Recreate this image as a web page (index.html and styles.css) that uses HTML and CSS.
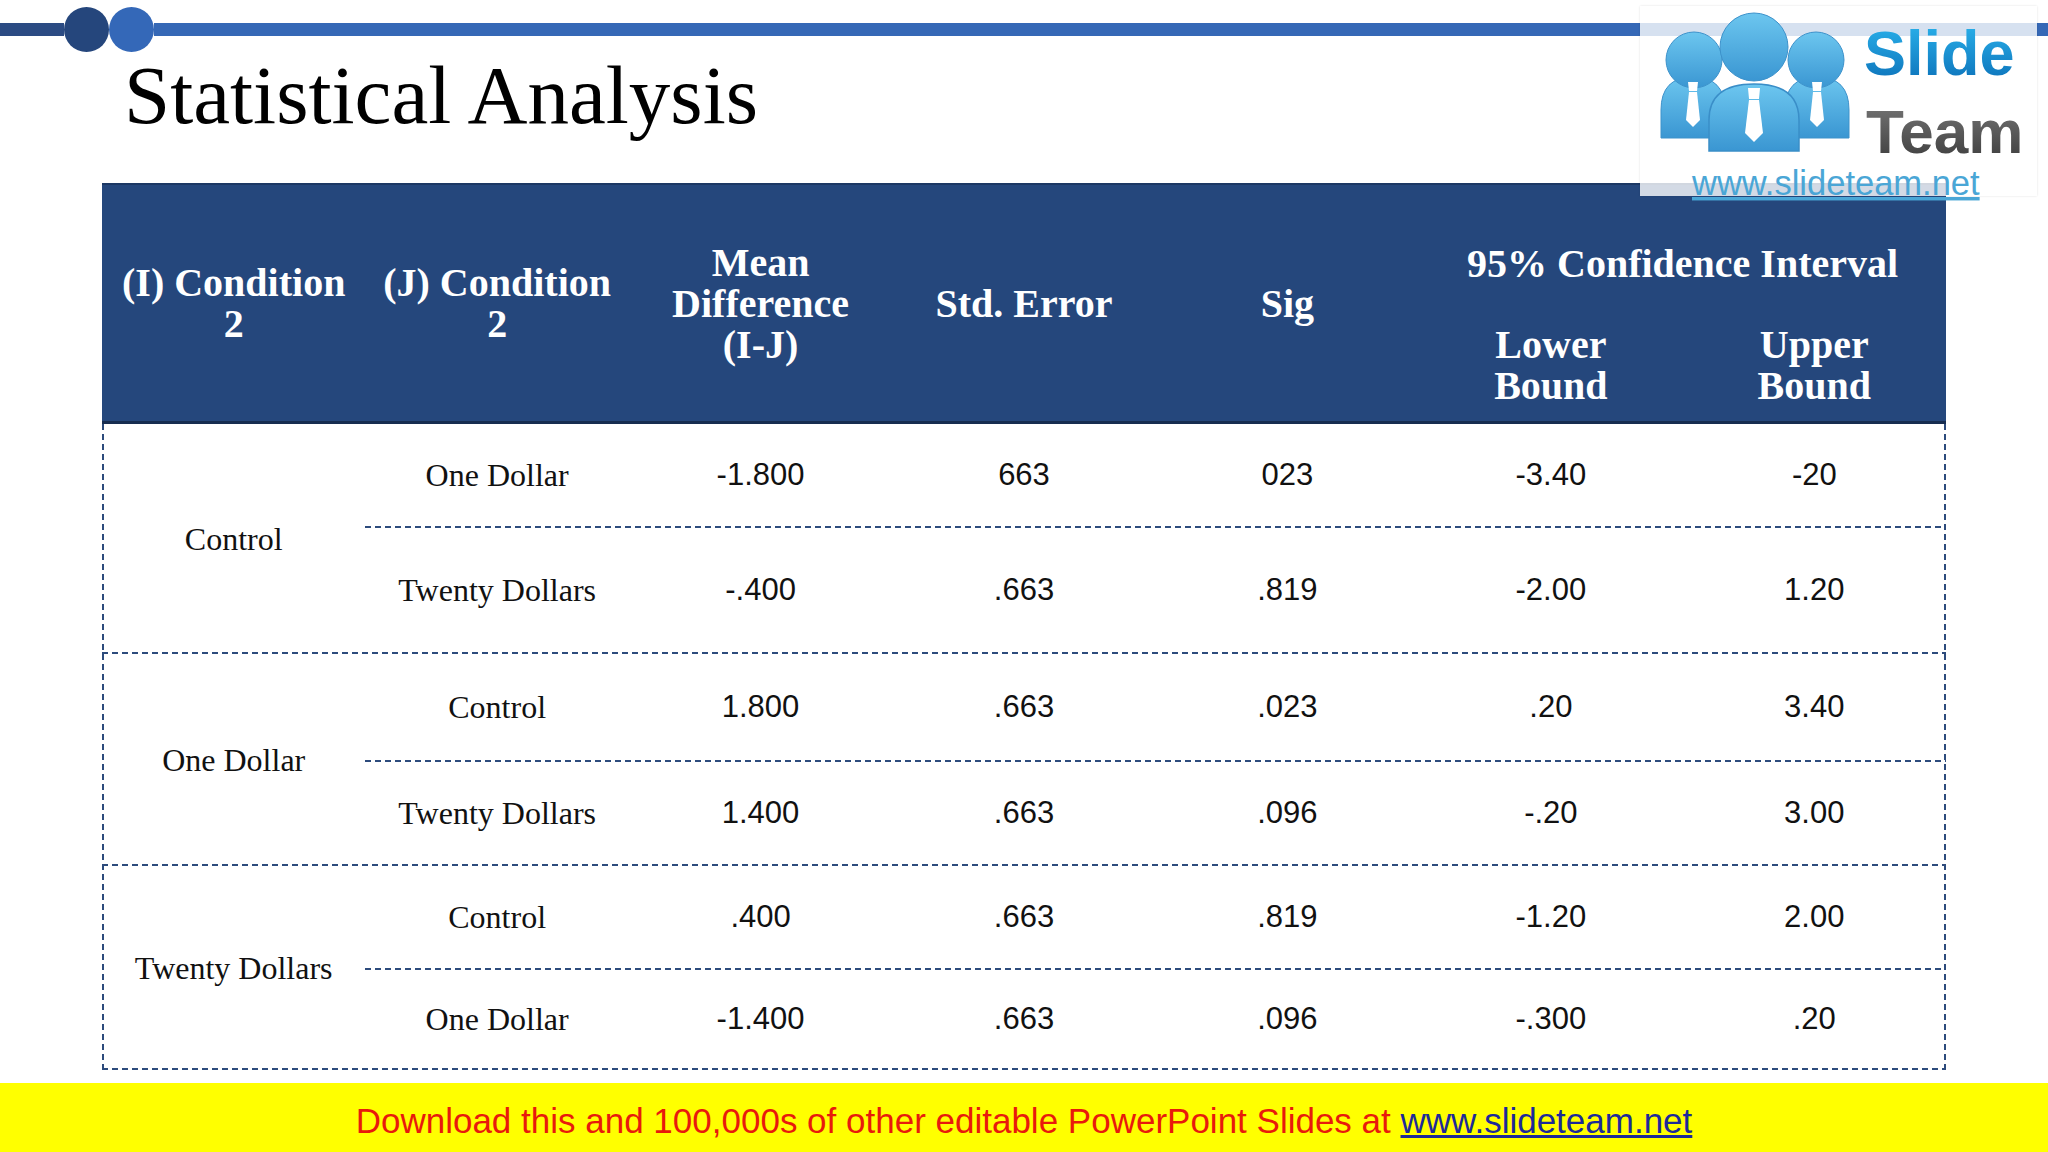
FILE: index.html
```html
<!DOCTYPE html>
<html lang="en">
<head>
<meta charset="utf-8">
<title>Statistical Analysis</title>
<link rel="stylesheet" href="styles.css">
</head>
<body>
<div class="slide">
  <div class="topbar">
    <span class="bar bar-dark"></span>
    <span class="dot dot-dark"></span>
    <span class="dot dot-light"></span>
    <span class="bar bar-light"></span>
  </div>

  <h1 class="title">Statistical Analysis</h1>

  <div class="stats-table">
    <div class="thead">
      <div class="th">(I) Condition<br>2</div>
      <div class="th">(J) Condition<br>2</div>
      <div class="th">Mean<br>Difference<br>(I-J)</div>
      <div class="th">Std. Error</div>
      <div class="th">Sig</div>
      <div class="th ci">
        <div class="ci-top">95% Confidence Interval</div>
        <div class="ci-sub">
          <div>Lower<br>Bound</div>
          <div>Upper<br>Bound</div>
        </div>
      </div>
    </div>

    <div class="tbody">
      <div class="group">
        <div class="label">Control</div>
        <div class="rows">
          <div class="row row-s">
            <div class="name">One Dollar</div>
            <div class="num">-1.800</div>
            <div class="num">663</div>
            <div class="num">023</div>
            <div class="num">-3.40</div>
            <div class="num">-20</div>
          </div>
          <div class="row row-l">
            <div class="name">Twenty Dollars</div>
            <div class="num">-.400</div>
            <div class="num">.663</div>
            <div class="num">.819</div>
            <div class="num">-2.00</div>
            <div class="num">1.20</div>
          </div>
        </div>
      </div>

      <div class="group">
        <div class="label">One Dollar</div>
        <div class="rows">
          <div class="row row-m">
            <div class="name">Control</div>
            <div class="num">1.800</div>
            <div class="num">.663</div>
            <div class="num">.023</div>
            <div class="num">.20</div>
            <div class="num">3.40</div>
          </div>
          <div class="row row-m">
            <div class="name">Twenty Dollars</div>
            <div class="num">1.400</div>
            <div class="num">.663</div>
            <div class="num">.096</div>
            <div class="num">-.20</div>
            <div class="num">3.00</div>
          </div>
        </div>
      </div>

      <div class="group">
        <div class="label">Twenty Dollars</div>
        <div class="rows">
          <div class="row row-s">
            <div class="name">Control</div>
            <div class="num">.400</div>
            <div class="num">.663</div>
            <div class="num">.819</div>
            <div class="num">-1.20</div>
            <div class="num">2.00</div>
          </div>
          <div class="row row-s">
            <div class="name">One Dollar</div>
            <div class="num">-1.400</div>
            <div class="num">.663</div>
            <div class="num">.096</div>
            <div class="num">-.300</div>
            <div class="num">.20</div>
          </div>
        </div>
      </div>
    </div>
  </div>

  <div class="footer">
    <span>Download this and 100,000s of other editable PowerPoint Slides at&nbsp;</span><a class="footer-link">www.slideteam.net</a>
  </div>

  <div class="logo">
    <svg class="logo-svg" width="397" height="190" viewBox="0 0 397 190">
      <defs>
        <linearGradient id="pg" x1="0" y1="0" x2="0" y2="1">
          <stop offset="0" stop-color="#6cc6ef"/>
          <stop offset="1" stop-color="#3a96d2"/>
        </linearGradient>
        <linearGradient id="sg" x1="0" y1="0" x2="0" y2="1">
          <stop offset="0" stop-color="#2cb6ee"/>
          <stop offset="1" stop-color="#0a6db6"/>
        </linearGradient>
        <linearGradient id="tg" x1="0" y1="0" x2="0" y2="1">
          <stop offset="0" stop-color="#7a7a7a"/>
          <stop offset="1" stop-color="#3a3a3a"/>
        </linearGradient>
      </defs>
      <!-- side bodies -->
      <path d="M21 132 L21 104 Q21 71 53 71 Q85 71 85 104 L85 132 Z" fill="url(#pg)" stroke="#3d92cb" stroke-width="1"/>
      <path d="M145 132 L145 104 Q145 71 177 71 Q209 71 209 104 L209 132 Z" fill="url(#pg)" stroke="#3d92cb" stroke-width="1"/>
      <circle cx="54" cy="54" r="28" fill="url(#pg)" stroke="#3d92cb" stroke-width="1"/>
      <circle cx="176" cy="54" r="28" fill="url(#pg)" stroke="#3d92cb" stroke-width="1"/>
      <polygon points="48,76 58,76 57,85 49,85" fill="#fff"/>
      <polygon points="49,86 57,86 60,114 53,121 46,114" fill="#fff"/>
      <polygon points="172,76 182,76 181,85 173,85" fill="#fff"/>
      <polygon points="173,86 181,86 184,114 177,121 170,114" fill="#fff"/>
      <!-- middle person -->
      <path d="M69 145 L69 114 Q69 78 114 78 Q159 78 159 114 L159 145 Z" fill="url(#pg)" stroke="#3a8ec8" stroke-width="1.5"/>
      <circle cx="114" cy="41" r="34" fill="url(#pg)" stroke="#3d92cb" stroke-width="1"/>
      <polygon points="108,82 120,82 119,93 109,93" fill="#fff"/>
      <polygon points="109,94 119,94 123,127 114,136 105,127" fill="#fff"/>
      <text x="224" y="69" class="logo-slide" fill="url(#sg)">Slide</text>
      <text x="226" y="147" class="logo-team" fill="url(#tg)">Team</text>
      <text x="52" y="189" class="logo-url">www.slideteam.net</text>
    </svg>
  </div>
</div>
</body>
</html>
```

FILE: styles.css
```css
* {
  box-sizing: border-box;
}

html, body {
  margin: 0;
  padding: 0;
  background: #ffffff;
}

.slide {
  position: relative;
  width: 2048px;
  height: 1152px;
  overflow: hidden;
  background: #ffffff;
}

/* ---------- top decorative bar ---------- */
.topbar {
  display: flex;
  align-items: center;
  height: 52px;
  padding-top: 7px;
}

.bar {
  display: block;
  height: 13px;
}

.bar-dark {
  width: 64px;
  background: #2b4b83;
}

.bar-light {
  flex: 1;
  background: #3568b6;
}

.dot {
  display: block;
  width: 45px;
  height: 45px;
  border-radius: 50%;
}

.dot-dark {
  background: #25467c;
}

.dot-light {
  background: #3468b8;
}

/* ---------- title ---------- */
.title {
  margin: 2px 0 0 124px;
  height: 83px;
  font-family: "Liberation Serif", "Times New Roman", serif;
  font-weight: 400;
  font-size: 83px;
  line-height: 83px;
  color: #000;
}

/* ---------- table ---------- */
.stats-table {
  margin: 46px 0 0 102px;
  width: 1844px;
}

.thead {
  display: grid;
  grid-template-columns: repeat(5, 1fr) 2fr;
  height: 241px;
  background: #25477c;
  border-top: 2px solid #1c3864;
  border-bottom: 3px solid #172d50;
  color: #ffffff;
  font-family: "Liberation Serif", "Times New Roman", serif;
  font-weight: 700;
  font-size: 40px;
  line-height: 41px;
}

.th {
  display: flex;
  align-items: center;
  justify-content: center;
  text-align: center;
}

.th.ci {
  flex-direction: column;
  justify-content: flex-start;
  align-items: stretch;
  padding-top: 58px;
}

.ci-top {
  text-align: center;
}

.ci-sub {
  display: grid;
  grid-template-columns: 1fr 1fr;
  margin-top: 40px;
  text-align: center;
}

.tbody {
  background-image:
    repeating-linear-gradient(180deg, #2d4b7c 0 6px, transparent 6px 10px),
    repeating-linear-gradient(180deg, #2d4b7c 0 6px, transparent 6px 10px);
  background-size: 2px 100%, 2px 100%;
  background-position: left top, right top;
  background-repeat: no-repeat;
}

.group {
  display: grid;
  grid-template-columns: 263.43px 1fr;
  background-image: repeating-linear-gradient(90deg, #2d4b7c 0 6px, transparent 6px 10px);
  background-size: 100% 2px;
  background-position: left bottom;
  background-repeat: no-repeat;
}

.label {
  display: flex;
  align-items: center;
  justify-content: center;
  font-family: "Liberation Serif", "Times New Roman", serif;
  font-size: 32px;
  color: #111;
}

.rows {
  display: flex;
  flex-direction: column;
}

.row {
  display: grid;
  grid-template-columns: repeat(6, 1fr);
  align-items: center;
  text-align: center;
  color: #111;
}

.row + .row {
  background-image: repeating-linear-gradient(90deg, #2d4b7c 0 6px, transparent 6px 10px);
  background-size: 100% 2px;
  background-position: left top;
  background-repeat: no-repeat;
}

.row-s {
  height: 102px;
}

.row-m {
  height: 106px;
}

.row-l {
  height: 128px;
}

.name {
  font-family: "Liberation Serif", "Times New Roman", serif;
  font-size: 32px;
}

.num {
  font-family: "Liberation Sans", Arial, sans-serif;
  font-size: 31px;
}

/* ---------- footer ---------- */
.footer {
  display: flex;
  align-items: center;
  justify-content: center;
  margin-top: 13px;
  height: 69px;
  background: #ffff00;
  font-family: "Liberation Sans", Arial, sans-serif;
  font-size: 35px;
  color: #e81a0c;
  padding-top: 6px;
}

.footer-link {
  color: #1d2a98;
  text-decoration: underline;
}

/* ---------- logo overlay ---------- */
.logo {
  position: absolute;
  left: 1640px;
  top: 6px;
  width: 397px;
  height: 190px;
  background: rgba(255, 255, 255, 0.8);
  box-shadow: 0 0 2px rgba(0, 0, 0, 0.12);
}

.logo-svg {
  display: block;
  overflow: visible;
}

.logo-slide {
  font-family: "Liberation Sans", Arial, sans-serif;
  font-weight: 700;
  font-size: 63px;
}

.logo-team {
  font-family: "Liberation Sans", Arial, sans-serif;
  font-weight: 700;
  font-size: 62px;
}

.logo-url {
  font-family: "Liberation Sans", Arial, sans-serif;
  font-size: 34.5px;
  fill: #4aa6d6;
  text-decoration: underline;
}
```
